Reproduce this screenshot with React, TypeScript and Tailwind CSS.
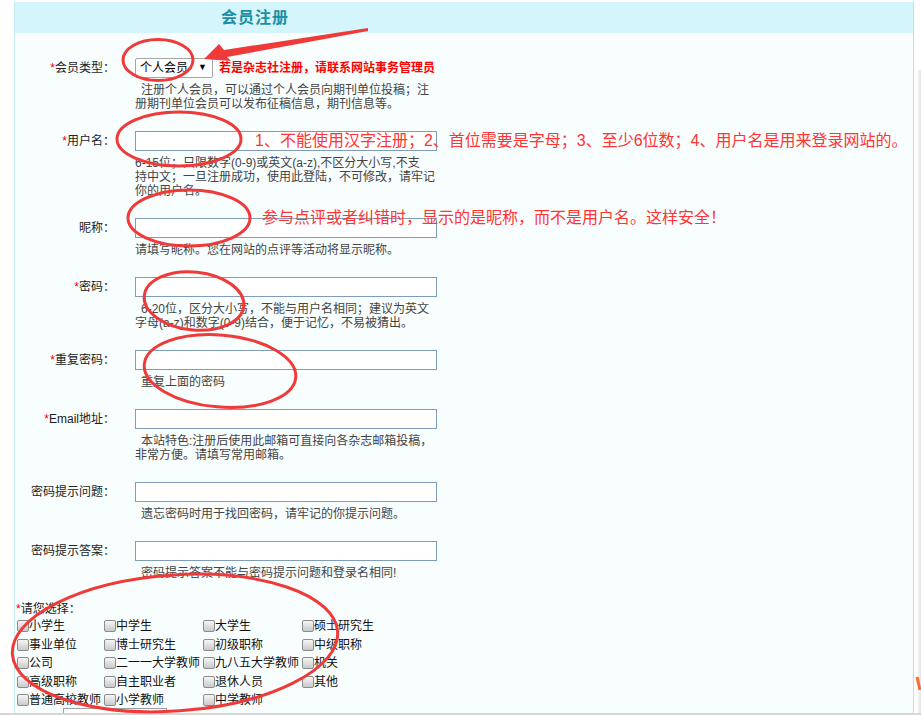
import type { ReactNode } from "react";

const font = "font-['Liberation_Sans','Noto_Sans_CJK_SC',sans-serif]";

interface FieldRowProps {
  label: string;
  required?: boolean;
  height: string;
  control: ReactNode;
  help: string[];
  indent?: boolean;
}

function TextInput() {
  return <div className="h-[20px] w-[302px] border border-[#7f9db9] bg-white" />;
}

function FieldRow({ label, required, height, control, help, indent }: FieldRowProps) {
  return (
    <div className={height}>
      <div className="flex h-[20px] items-center">
        <div className="w-[100px] text-right text-[12px] leading-[20px] text-[#222]">
          {required && <span className="text-[#ee0000]">*</span>}
          {label}
        </div>
        <div className="ml-[20px]">{control}</div>
      </div>
      <div className="mt-[5px] ml-[120px] w-[305px] text-[12px] leading-[14px] text-[#444]">
        {help.map((line, i) => (
          <div key={i} className={i === 0 && indent ? "pl-[6px]" : ""}>
            {line}
          </div>
        ))}
      </div>
    </div>
  );
}

const choices = [
  ["小学生", "中学生", "大学生", "硕士研究生"],
  ["事业单位", "博士研究生", "初级职称", "中级职称"],
  ["公司", "二一一大学教师", "九八五大学教师", "机关"],
  ["高级职称", "自主职业者", "退休人员", "其他"],
  ["普通高校教师", "小学教师", "中学教师"],
];

function Check({ text }: { text: string }) {
  return (
    <div className="flex items-start">
      <span className="mt-[2px] h-[12px] w-[12px] shrink-0 rounded-[2px] border border-[#8c8c8c] bg-linear-to-b from-[#f6f6f6] to-[#c9c9c9]" />
      <span className="whitespace-nowrap text-[12px] leading-[16px] text-[#111]">{text}</span>
    </div>
  );
}

function Annotations() {
  return (
    <div className="pointer-events-none absolute inset-0">
      <svg width="921" height="715" className="absolute left-0 top-0" fill="none">
        <g stroke="#f03a3a" strokeWidth="3">
          <ellipse cx="158" cy="60" rx="35" ry="20.5" />
          <ellipse cx="179" cy="139" rx="62" ry="27" />
          <ellipse cx="189" cy="218" rx="61" ry="28" />
          <ellipse cx="194" cy="301" rx="50" ry="29" transform="rotate(6 194 301)" />
          <ellipse cx="220" cy="371" rx="76" ry="36" transform="rotate(5 220 371)" />
          <ellipse cx="175" cy="643" rx="163" ry="68" transform="rotate(-4 175 643)" />
        </g>
        <polygon
          points="204,59 219,44 224,50 368,28 368,31 227,57 231,61"
          fill="#f03a3a"
        />
        <path d="M917 677 L920 690" stroke="#ff6a2a" strokeWidth="3" />
      </svg>
      <div className="absolute left-[255px] top-[132px] whitespace-nowrap text-[16px] leading-[18px] text-[#ff3434]">
        1、不能使用汉字注册；2、首位需要是字母；3、至少6位数；4、用户名是用来登录网站的。
      </div>
      <div className="absolute left-[262px] top-[209px] whitespace-nowrap text-[16px] leading-[18px] text-[#ff3434]">
        参与点评或者纠错时，显示的是昵称，而不是用户名。这样安全！
      </div>
    </div>
  );
}

export default function App() {
  return (
    <div className={`relative h-[715px] w-[921px] overflow-hidden bg-white ${font}`}>
      <div className="flex h-[713px] flex-col">
        <div className="flex flex-1">
          <div className="ml-[14px] mt-[2px] flex h-[711px] w-[900px] flex-col overflow-hidden border-l border-r border-l-[#c4ecf4] border-r-[#c6dde6] bg-[#f8fdfe]">
            <div className="h-[31px] shrink-0 bg-[#d4f5fb]">
              <div className="w-[480px] text-center text-[16px] font-bold leading-[31px] tracking-[1px] text-[#1b8fa3]">
                会员注册
              </div>
            </div>

            <div className="pt-[25px]">
              <FieldRow
                label="会员类型："
                required
                height="h-[73px]"
                indent
                control={
                  <div className="flex items-center">
                    <div className="flex h-[20px] w-[78px] items-center justify-between rounded-[2px] border border-[#a6a6a6] bg-white pl-[4px] pr-[5px] text-[12px] text-black">
                      <span>个人会员</span>
                      <span className="text-[9px]">▼</span>
                    </div>
                    <span className="ml-[6px] whitespace-nowrap text-[12px] font-bold text-[#ff0000]">
                      若是杂志社注册，请联系网站事务管理员
                    </span>
                  </div>
                }
                help={["注册个人会员，可以通过个人会员向期刊单位投稿；注", "册期刊单位会员可以发布征稿信息，期刊信息等。"]}
              />
              <FieldRow
                label="用户名："
                required
                height="h-[87px]"
                control={<TextInput />}
                help={[
                  "6-15位；只限数字(0-9)或英文(a-z),不区分大小写,不支",
                  "持中文；一旦注册成功，使用此登陆，不可修改，请牢记",
                  "你的用户名。",
                ]}
              />
              <FieldRow
                label="昵称："
                height="h-[59px]"
                control={<TextInput />}
                help={["请填写昵称。您在网站的点评等活动将显示昵称。"]}
              />
              <FieldRow
                label="密码："
                required
                height="h-[73px]"
                indent
                control={<TextInput />}
                help={["6-20位，区分大小写，不能与用户名相同；建议为英文", "字母(a-z)和数字(0-9)结合，便于记忆，不易被猜出。"]}
              />
              <FieldRow
                label="重复密码："
                required
                height="h-[59px]"
                indent
                control={<TextInput />}
                help={["重复上面的密码"]}
              />
              <FieldRow
                label="Email地址："
                required
                height="h-[73px]"
                indent
                control={<TextInput />}
                help={["本站特色:注册后使用此邮箱可直接向各杂志邮箱投稿，", "非常方便。请填写常用邮箱。"]}
              />
              <FieldRow
                label="密码提示问题："
                height="h-[59px]"
                indent
                control={<TextInput />}
                help={["遗忘密码时用于找回密码，请牢记的你提示问题。"]}
              />
              <FieldRow
                label="密码提示答案："
                height="h-[57px]"
                indent
                control={<TextInput />}
                help={["密码提示答案不能与密码提示问题和登录名相同!"]}
              />

              <div className="h-[19px] pl-[1px] pt-[2px] text-[12px] leading-[18px] text-[#222]">
                <span className="text-[#ee0000]">*</span>请您选择：
              </div>
              <div className="pl-[2px] pt-[1px]">
                {choices.map((row, r) => (
                  <div key={r} className="grid h-[18.5px] grid-cols-[87px_99px_99px_99px]">
                    {row.map((c) => (
                      <Check key={c} text={c} />
                    ))}
                  </div>
                ))}
              </div>
              <div className="ml-[48px] mt-[-3px] h-[20px] w-[104px] border border-[#a0a0a0] bg-white" />
            </div>
          </div>
          <div className="ml-[4px] mt-[70px] w-[3px] bg-linear-to-r from-[#f2f2f2] to-[#e4e4e4]" />
        </div>
      </div>
      <div className="h-[2px] bg-[#d6d6d6]" />
      <Annotations />
    </div>
  );
}
